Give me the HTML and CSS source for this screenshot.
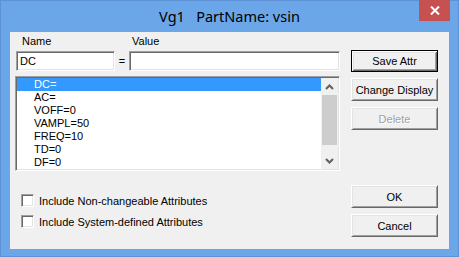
FILE: index.html
```html
<!DOCTYPE html>
<html>
<head>
<meta charset="utf-8">
<link rel="stylesheet" href="styles.css">
</head>
<body>
<div class="window">
  <div class="titlebar">
    <span class="spacer"></span>
    <span class="title">Vg1   PartName: vsin</span>
    <span class="close"><svg width="10" height="9" viewBox="0 0 10 9"><path d="M1 0.5 L9 8.5 M9 0.5 L1 8.5" stroke="#fff" stroke-width="2" fill="none"/></svg></span>
  </div>
  <div class="client">
    <div class="left">
      <div class="labels"><span class="lbl-name">Name</span><span class="lbl-value">Value</span></div>
      <div class="inputs">
        <div class="field name-field">DC</div>
        <span class="eq">=</span>
        <div class="field value-field"></div>
      </div>
      <div class="listbox">
        <ul class="items">
          <li class="sel">DC=</li>
          <li>AC=</li>
          <li>VOFF=0</li>
          <li>VAMPL=50</li>
          <li>FREQ=10</li>
          <li>TD=0</li>
          <li>DF=0</li>
        </ul>
        <div class="scrollbar">
          <div class="arrow"><svg width="9" height="6" viewBox="0 0 9 6"><path d="M1 5 L4.5 1.5 L8 5" stroke="#606060" stroke-width="2" fill="none"/></svg></div>
          <div class="track"><div class="thumb"></div></div>
          <div class="arrow"><svg width="9" height="6" viewBox="0 0 9 6"><path d="M1 1 L4.5 4.5 L8 1" stroke="#606060" stroke-width="2" fill="none"/></svg></div>
        </div>
      </div>
      <div class="checks">
        <div class="check"><span class="box"></span><span>Include Non-changeable Attributes</span></div>
        <div class="check"><span class="box"></span><span>Include System-defined Attributes</span></div>
      </div>
    </div>
    <div class="right">
      <div class="btn default save">Save Attr</div>
      <div class="btn change">Change Display</div>
      <div class="btn disabled delete">Delete</div>
      <div class="btn ok">OK</div>
      <div class="btn cancel">Cancel</div>
    </div>
  </div>
</div>
</body>
</html>
```

FILE: styles.css
```css
* { box-sizing: border-box; }
html, body { margin: 0; padding: 0; }
body {
  width: 459px;
  height: 257px;
  overflow: hidden;
  background: #fff;
  font-family: "Liberation Sans", Arial, sans-serif;
  font-size: 11px;
  color: #000;
}
.window {
  width: 459px;
  height: 257px;
  background: #6ba6e9;
  border: 1px solid #5d93d6;
  padding: 0 9px 7px 9px;
  display: flex;
  flex-direction: column;
}
.titlebar {
  height: 31px;
  margin: 0 -9px;
  display: grid;
  grid-template-columns: 1fr auto 1fr;
  align-items: start;
}
.title {
  white-space: pre;
  font-family: "Noto Sans", "Open Sans", sans-serif;
  font-size: 14.5px;
  line-height: 20px;
  padding-top: 5px;
  color: #000;
}
.close {
  justify-self: end;
  margin-top: -1px;
  margin-right: 8px;
  width: 31px;
  height: 21px;
  background: #c75050;
  display: flex;
  align-items: center;
  justify-content: center;
}
.client {
  flex: 1;
  background: #f0f0f0;
  display: flex;
  padding: 0 11px 0 5px;
}
.left {
  width: 325px;
  display: flex;
  flex-direction: column;
}
.labels {
  margin-top: 3px;
  height: 13px;
  line-height: 13px;
  position: relative;
  display: flex;
}
.lbl-name { margin-left: 7px; width: 110px; }
.inputs {
  margin-top: 3px;
  display: flex;
  align-items: center;
  height: 20px;
  padding-left: 1px;
}
.field {
  height: 20px;
  background: #fff;
  border: 1px solid;
  border-color: #a0a0a0 #fff #fff #a0a0a0;
  box-shadow: inset 1px 1px 0 #696969, inset -1px -1px 0 #e3e3e3;
  padding: 0 3px;
  line-height: 18px;
}
.name-field { width: 99px; }
.eq { width: 14px; text-align: center; }
.value-field { flex: 1; }
.listbox {
  margin-top: 5px;
  height: 95px;
  border: 1px solid;
  border-color: #a0a0a0 #fff #fff #a0a0a0;
  box-shadow: inset 1px 1px 0 #696969, inset -1px -1px 0 #e3e3e3;
  padding: 1px 1px 1px 1px;
  background: #fff;
  display: flex;
}
.items {
  list-style: none;
  margin: 0;
  padding: 0;
  flex: 1;
}
.items li {
  height: 13px;
  line-height: 13px;
  padding-left: 17px;
}
.items li.sel { background: #3399ff; color: #fff; }
.scrollbar {
  width: 17px;
  background: #f0f0f0;
  display: flex;
  flex-direction: column;
}
.arrow {
  height: 17px;
  display: flex;
  align-items: center;
  justify-content: center;
}
.track { flex: 1; padding: 0 1px; }
.thumb { height: 50px; background: #cdcdcd; }
.checks {
  margin-top: 23px;
  display: flex;
  flex-direction: column;
  gap: 8px;
}
.check {
  display: flex;
  align-items: center;
  height: 13px;
  padding-left: 6px;
}
.box {
  width: 13px;
  height: 13px;
  margin-right: 5px;
  background: #fff;
  border: 1px solid;
  border-color: #a0a0a0 #fff #fff #a0a0a0;
  box-shadow: inset 1px 1px 0 #696969, inset -1px -1px 0 #e3e3e3;
}
.right {
  margin-left: 11px;
  width: 87px;
  display: flex;
  flex-direction: column;
}
.btn {
  height: 23px;
  background: #f0f0f0;
  border: 1px solid;
  border-color: #fff #696969 #696969 #fff;
  box-shadow: inset 1px 1px 0 #e3e3e3, inset -1px -1px 0 #a0a0a0;
  display: flex;
  align-items: center;
  justify-content: center;
}
.btn.default {
  border: 1px solid #000;
  box-shadow: inset 1px 1px 0 #fff, inset -1px -1px 0 #696969, inset 2px 2px 0 #e3e3e3, inset -2px -2px 0 #a0a0a0;
}
.btn.disabled { color: #a0a0a0; text-shadow: 1px 1px 0 #fff; }
.save { margin-top: 18px; height: 22px; }
.change { margin-top: 6px; }
.delete { margin-top: 6px; }
.ok { margin-top: 55px; }
.cancel { margin-top: 6px; }
```
